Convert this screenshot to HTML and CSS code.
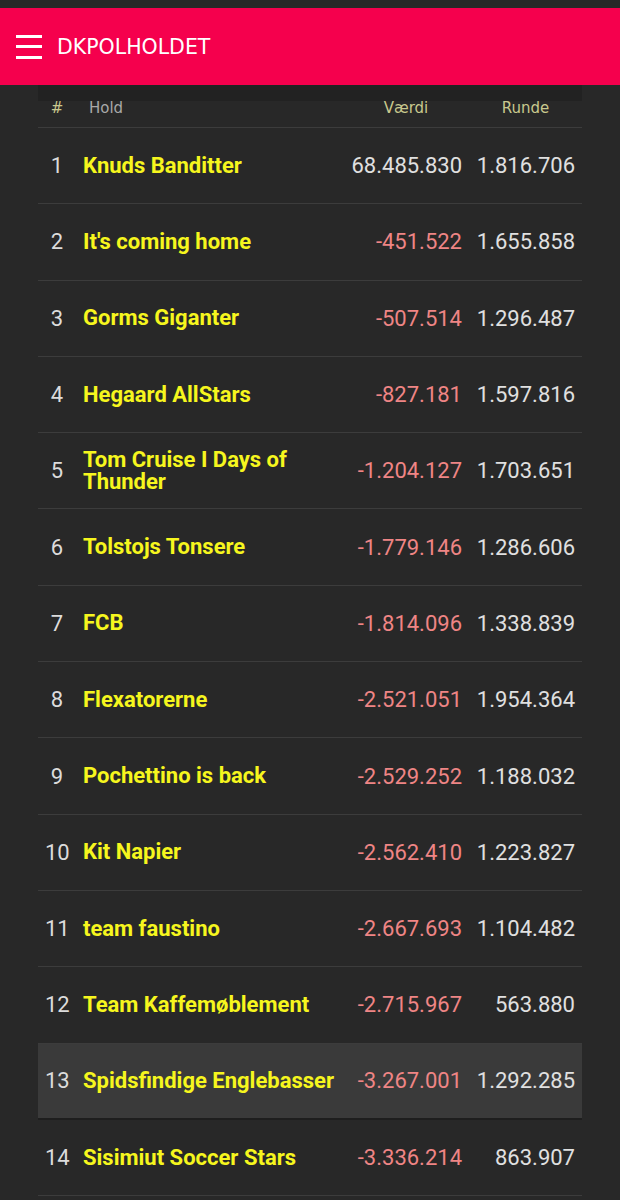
FILE: index.html
```html
<!DOCTYPE html>
<html lang="da">
<head>
  <meta charset="UTF-8" />
  <meta name="viewport" content="width=device-width, initial-scale=1.0"/>
  <title>DKPOLHOLDET</title>
  <link rel="stylesheet" href="styles.css">
</head>
<body>

  <header class="topbar">
    <svg class="menu-icon" width="26" height="24" viewBox="0 0 26 24">
      <rect x="0" y="0" width="26" height="3" fill="#fff"/>
      <rect x="0" y="10" width="26" height="3" fill="#fff"/>
      <rect x="0" y="21" width="26" height="3" fill="#fff"/>
    </svg>
    <span class="title">DKPOLHOLDET</span>
  </header>

  <main class="standings">
    <div class="row head">
      <div class="pos">#</div>
      <div class="team">Hold</div>
      <div class="num">Værdi</div>
      <div class="num">Runde</div>
    </div>

    <div class="row"><div class="pos">1</div><div class="team">Knuds Banditter</div><div class="value">68.485.830</div><div class="round">1.816.706</div></div>
    <div class="row"><div class="pos">2</div><div class="team">It's coming home</div><div class="value neg">-451.522</div><div class="round">1.655.858</div></div>
    <div class="row"><div class="pos">3</div><div class="team">Gorms Giganter</div><div class="value neg">-507.514</div><div class="round">1.296.487</div></div>
    <div class="row"><div class="pos">4</div><div class="team">Hegaard AllStars</div><div class="value neg">-827.181</div><div class="round">1.597.816</div></div>
    <div class="row"><div class="pos">5</div><div class="team">Tom Cruise I Days of Thunder</div><div class="value neg">-1.204.127</div><div class="round">1.703.651</div></div>
    <div class="row"><div class="pos">6</div><div class="team">Tolstojs Tonsere</div><div class="value neg">-1.779.146</div><div class="round">1.286.606</div></div>
    <div class="row"><div class="pos">7</div><div class="team">FCB</div><div class="value neg">-1.814.096</div><div class="round">1.338.839</div></div>
    <div class="row"><div class="pos">8</div><div class="team">Flexatorerne</div><div class="value neg">-2.521.051</div><div class="round">1.954.364</div></div>
    <div class="row"><div class="pos">9</div><div class="team">Pochettino is back</div><div class="value neg">-2.529.252</div><div class="round">1.188.032</div></div>
    <div class="row"><div class="pos">10</div><div class="team">Kit Napier</div><div class="value neg">-2.562.410</div><div class="round">1.223.827</div></div>
    <div class="row"><div class="pos">11</div><div class="team">team faustino</div><div class="value neg">-2.667.693</div><div class="round">1.104.482</div></div>
    <div class="row"><div class="pos">12</div><div class="team">Team Kaffemøblement</div><div class="value neg">-2.715.967</div><div class="round">563.880</div></div>
    <div class="row mine"><div class="pos">13</div><div class="team">Spidsfindige Englebasser</div><div class="value neg">-3.267.001</div><div class="round">1.292.285</div></div>
    <div class="row"><div class="pos">14</div><div class="team">Sisimiut Soccer Stars</div><div class="value neg">-3.336.214</div><div class="round">863.907</div></div>
  </main>

</body>
</html>
```

FILE: styles.css
```css
body {
  margin: 0;
  background: #282828;
  font-family: Roboto, 'Noto Sans', sans-serif;
  color: #e0e0e0;
  padding-top: 8px;
}

.topbar {
  height: 77px;
  background: #f5004d;
  display: flex;
  align-items: center;
  padding-left: 16px;
  gap: 15px;
}

.menu-icon {
  display: block;
}

.title {
  font-family: 'DejaVu Sans', sans-serif;
  font-size: 20.5px;
  color: #fff;
  margin-top: 1px;
}

.standings {
  margin: 0 38px;
}

.row {
  display: grid;
  grid-template-columns: 38px 1fr 126px 113px;
  align-items: center;
  height: 76.3px;
  box-sizing: border-box;
  border-bottom: 1px solid #3c3c3c;
}

.row > div {
  padding: 0 7px;
}

.row.head {
  height: 43px;
  background: linear-gradient(#222222 0, #222222 16px, #282828 16px);
  font-family: 'DejaVu Sans', sans-serif;
  font-size: 15px;
  color: #c8c88e;
  padding-top: 4px;
}

.row.head .team {
  color: #a8a8a8;
  padding-left: 13px;
}

.row.head .num {
  text-align: center;
}

.row.mine {
  background: #3a3a3a;
  border-bottom: 2px solid #1e1e1e;
}

.pos {
  text-align: center;
  font-size: 22px;
  color: #dcdcdc;
}

.row.head .pos {
  font-size: 15px;
  color: #c8c88e;
}

.team {
  font-weight: bold;
  font-size: 22px;
  line-height: 22px;
  color: #f6f61e;
}

.row.head .team {
  font-weight: normal;
  font-size: 15px;
}

.value,
.round {
  font-size: 22px;
  text-align: right;
  white-space: nowrap;
}

.neg {
  color: #ef8585;
}
```
